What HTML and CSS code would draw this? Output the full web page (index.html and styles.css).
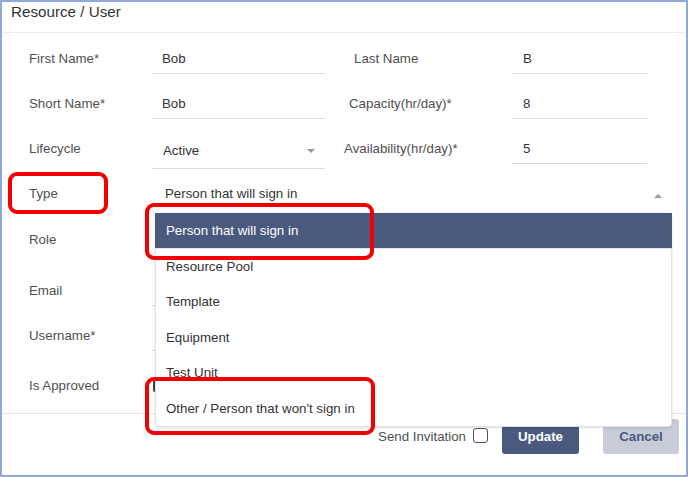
FILE: index.html
```html
<!DOCTYPE html>
<html>
<head>
<meta charset="utf-8">
<link rel="stylesheet" href="styles.css">
</head>
<body>
<div class="frame">
  <div class="header"><span class="title">Resource / User</span></div>
  <div class="body">
    <div class="row">
      <div class="label">First Name*</div>
      <div class="field"><span class="value">Bob</span></div>
      <div class="label2 l2-last">Last Name</div>
      <div class="field field2"><span class="value">B</span></div>
    </div>
    <div class="row">
      <div class="label">Short Name*</div>
      <div class="field"><span class="value">Bob</span></div>
      <div class="label2 l2-cap">Capacity(hr/day)*</div>
      <div class="field field2"><span class="value">8</span></div>
    </div>
    <div class="row">
      <div class="label">Lifecycle</div>
      <div class="field select-life"><span class="value">Active</span><span class="caret-down"></span></div>
      <div class="label2 l2-avail">Availability(hr/day)*</div>
      <div class="field field2"><span class="value">5</span></div>
    </div>
    <div class="row">
      <div class="label">Type</div>
      <div class="type-wrap">
        <div class="select-type"><span class="value">Person that will sign in</span><span class="caret-up"></span></div>
        <ul class="menu">
          <li class="item active">Person that will sign in</li>
          <li class="item">Resource Pool</li>
          <li class="item">Template</li>
          <li class="item">Equipment</li>
          <li class="item">Test Unit</li>
          <li class="item">Other / Person that won't sign in</li>
        </ul>
      </div>
    </div>
    <div class="row row-role">
      <div class="label">Role</div>
      <div class="field wide nounderline"></div>
    </div>
    <div class="row row-email">
      <div class="label">Email</div>
      <div class="field wide"></div>
    </div>
    <div class="row row-user">
      <div class="label">Username*</div>
      <div class="field wide"></div>
    </div>
    <div class="row row-approved">
      <div class="label">Is Approved</div>
      <div class="approve-box"></div>
    </div>
  </div>
  <div class="footer">
    <span class="invite">Send Invitation</span>
    <span class="checkbox"></span>
    <button class="btn btn-update">Update</button>
    <button class="btn btn-cancel">Cancel</button>
  </div>
  <div class="mark mark-type"></div>
  <div class="mark mark-opt1"></div>
  <div class="mark mark-opt2"></div>
</div>
</body>
</html>
```

FILE: styles.css
```css
html, body {
  margin: 0;
  padding: 0;
  background: #ffffff;
}

.frame {
  position: relative;
  width: 688px;
  height: 477px;
  box-sizing: border-box;
  border: 2px solid #8eaadb;
  background: #ffffff;
  display: flex;
  flex-direction: column;
  font-family: "Liberation Sans", Arial, sans-serif;
  font-size: 13.3px;
  color: #333333;
  overflow: hidden;
}

.header {
  height: 31px;
  box-sizing: border-box;
  border-bottom: 1px solid #ececec;
  padding: 1px 0 0 9px;
  flex: none;
}

.title {
  font-size: 15.2px;
  line-height: 18px;
  color: #333333;
}

.body {
  padding: 3px 0 0 27px;
  flex: none;
}

.row {
  display: flex;
  align-items: center;
  height: 45px;
}

.row-role { height: 46px; }
.row-email { height: 56px; }
.row-user { height: 34px; }
.row-approved {
  height: 61px;
  box-sizing: border-box;
  padding-top: 6px;
}

.label {
  width: 123px;
  flex: none;
  color: #505050;
}

.field {
  width: 173px;
  height: 31px;
  box-sizing: border-box;
  border-bottom: 1px solid #dddddd;
  display: flex;
  align-items: center;
  padding-left: 10px;
  flex: none;
}

.field.wide {
  width: 520px;
}

.field.nounderline {
  border-bottom-color: transparent;
}

.field2 {
  width: 135px;
  padding-left: 11px;
}

.label2 {
  width: 187px;
  box-sizing: border-box;
  flex: none;
  color: #505050;
}

.l2-last { padding-left: 29px; }
.l2-cap { padding-left: 24px; }
.l2-avail { padding-left: 19px; }

.value {
  color: #333333;
}

.select-life {
  height: 41px;
  padding: 5px 10px 0 11px;
  justify-content: space-between;
}

.caret-down {
  width: 0;
  height: 0;
  border-left: 4.5px solid transparent;
  border-right: 4.5px solid transparent;
  border-top: 4.5px solid #999999;
}

.type-wrap {
  position: relative;
  width: 520px;
  height: 45px;
  flex: none;
}

.select-type {
  height: 45px;
  box-sizing: border-box;
  display: flex;
  align-items: center;
  justify-content: space-between;
  padding: 0 10px 0 13px;
}

.caret-up {
  width: 0;
  height: 0;
  margin-top: 5px;
  border-left: 4.5px solid transparent;
  border-right: 4.5px solid transparent;
  border-bottom: 4.5px solid #999999;
}

.menu {
  position: absolute;
  left: 3px;
  top: 42px;
  width: 517px;
  margin: 0;
  padding: 0;
  list-style: none;
  background: #ffffff;
  box-sizing: border-box;
  border: 1px solid #e2e2e2;
  border-top: none;
  border-radius: 0 0 4px 4px;
  box-shadow: 0 1px 3px rgba(0, 0, 0, 0.12);
}

.item {
  height: 35.5px;
  box-sizing: border-box;
  display: flex;
  align-items: center;
  padding-left: 10px;
  color: #333333;
}

.item.active {
  background: #4a5a7e;
  color: #ffffff;
  border-bottom: 1px solid #dfe4ec;
  margin: 0 -1px;
  padding-left: 11px;
}

.approve-box {
  width: 13px;
  height: 13px;
  box-sizing: border-box;
  border: 2px solid #444444;
  border-radius: 2px;
  margin-left: 1px;
}

.footer {
  flex: 1;
  border-top: 1px solid #e5e5e5;
  display: flex;
  align-items: flex-start;
  justify-content: flex-end;
  padding: 5px 7px 0 0;
}

.invite {
  color: #505050;
  margin-top: 10px;
}

.checkbox {
  width: 15px;
  height: 15px;
  box-sizing: border-box;
  border: 1.5px solid #555555;
  border-radius: 3px;
  margin: 9px 0 0 7px;
}

.btn {
  height: 35px;
  border: none;
  border-radius: 3px;
  font-family: "Liberation Sans", Arial, sans-serif;
  font-size: 13.3px;
  font-weight: bold;
  padding: 0;
  cursor: pointer;
}

.btn-update {
  width: 77px;
  margin-left: 14px;
  background: #4a5a7e;
  color: #ffffff;
}

.btn-cancel {
  width: 76px;
  margin-left: 24px;
  background: #c8ccd9;
  color: #4a5a7e;
}

.mark {
  position: absolute;
  box-sizing: border-box;
  border: 4px solid #f20000;
  border-radius: 9px;
}

.mark-type {
  left: 6px;
  top: 170px;
  width: 100px;
  height: 42px;
}

.mark-opt1 {
  left: 143px;
  top: 201px;
  width: 229px;
  height: 57px;
}

.mark-opt2 {
  left: 143px;
  top: 375px;
  width: 230px;
  height: 58px;
}
```
